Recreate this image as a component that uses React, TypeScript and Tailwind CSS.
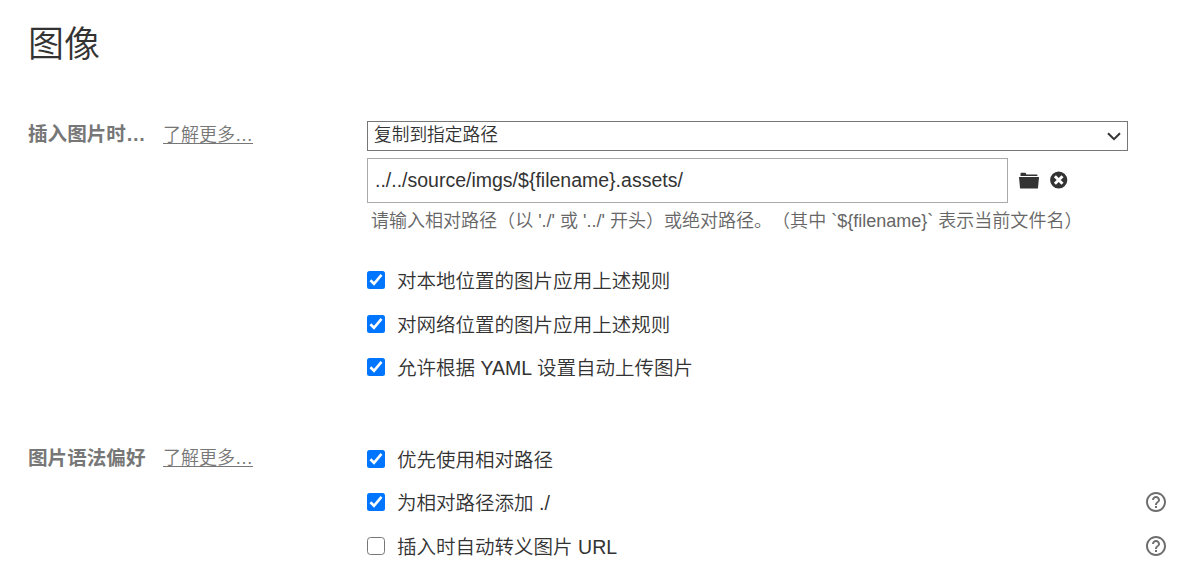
import type { ReactNode } from 'react';
import { MdHelpOutline } from 'react-icons/md';

function CheckRow({ label, checked = false, help = false }: { label: string; checked?: boolean; help?: boolean }) {
  return (
    <div className="flex h-[43.4px] items-center">
      <span
        className={
          checked
            ? 'flex size-[18px] shrink-0 items-center justify-center rounded-[2.5px] bg-[#0075ff]'
            : 'size-[18px] shrink-0 rounded-[3.5px] border-[1.5px] border-[#767676] bg-white'
        }
      >
        {checked && (
          <svg className="size-[18px]" viewBox="0 0 18 18" fill="none" stroke="white" strokeWidth="2.6">
            <path d="M3.4 9.3 L7 12.8 L14.5 3.8" />
          </svg>
        )}
      </span>
      <span className="ml-3 whitespace-nowrap pt-0.5 text-[19.52px] leading-7 text-[#333]">{label}</span>
      {help && <MdHelpOutline className="ml-auto size-6 shrink-0 text-[#6e6e6e]" />}
    </div>
  );
}

function Section({ title, children }: { title: string; children: ReactNode }) {
  return (
    <section className="grid grid-cols-[339px_1fr]">
      <div className="flex h-7 items-center whitespace-nowrap text-[#777]">
        <h2 className="w-[135px] text-[19.6px] font-bold">{title}</h2>
        <a href="#" className="text-[18px] underline decoration-1 underline-offset-2">了解更多…</a>
      </div>
      <div>{children}</div>
    </section>
  );
}

export default function App() {
  return (
    <main className="h-[579px] overflow-hidden bg-white pl-7 pr-[21px] pt-[17px] font-['Liberation_Sans','Noto_Sans_CJK_SC',sans-serif] font-[350] text-[#333] [text-spacing-trim:space-all]">
      <h1 className="h-[104px] pt-px text-[36px] leading-[54px]">图像</h1>
      <Section title="插入图片时…">
        <div className="flex h-[30px] w-[761px] items-center justify-between border border-[#767676] pl-1.5 pr-1.5">
          <span className="-mt-0.5 text-[17.7px] leading-6">复制到指定路径</span>
          <svg className="h-[9px] w-[14px]" viewBox="0 0 14 9" fill="none" stroke="#333" strokeWidth="2">
            <path d="M1 1.3 L7 7.2 L13 1.3" />
          </svg>
        </div>
        <div className="mt-[7px] flex items-center">
          <div className="flex h-[45px] w-[641px] items-center border border-[#aaa] pl-[7px] text-[19.5px]">
            {'../../source/imgs/${filename}.assets/'}
          </div>
          <svg className="-mt-px ml-[11px] h-[17px] w-5" viewBox="0 0 20 17" fill="#333">
            <path d="M1.5 4 V1.7 Q1.5 .7 2.5 .7 H6 Q7 .7 7.4 2.5 H17.5 Q18.5 2.5 18.5 3.5 V4 Z" />
            <path d="M0 5 H20 L19 16 Q18.9 16.5 18.4 16.5 H1.6 Q1.1 16.5 1 16 Z" />
          </svg>
          <svg className="-mt-0.5 ml-[11px] size-[18px]" viewBox="0 0 18 18">
            <circle cx="8.7" cy="9" r="8.6" fill="#333" />
            <path d="M4.9 5.2 L12.5 12.8 M12.5 5.2 L4.9 12.8" stroke="white" strokeWidth="2.9" />
          </svg>
        </div>
        <p className="mt-1 whitespace-nowrap pl-1 text-[18.03px] leading-7 text-[#666]">
          {"请输入相对路径（以 './' 或 '../' 开头）或绝对路径。（其中 `${filename}` 表示当前文件名）"}
        </p>
        <div className="mt-[23.6px]">
          <CheckRow checked label="对本地位置的图片应用上述规则" />
          <CheckRow checked label="对网络位置的图片应用上述规则" />
          <CheckRow checked label="允许根据 YAML 设置自动上传图片" />
        </div>
      </Section>
      <div className="h-14" />
      <Section title="图片语法偏好">
        <div className="-mt-[7.6px]">
          <CheckRow checked label="优先使用相对路径" />
          <CheckRow checked help label="为相对路径添加 ./" />
          <CheckRow help label="插入时自动转义图片 URL" />
        </div>
      </Section>
    </main>
  );
}
